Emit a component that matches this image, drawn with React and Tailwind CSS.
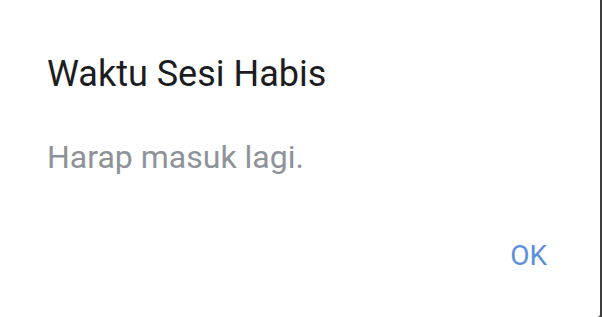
export default function App() {
  return (
    <div className="w-[602px] h-[317px] bg-[#3c3c3c] flex overflow-hidden" style={{ fontFamily: 'Roboto, "Noto Sans", sans-serif' }}>
      <div className="w-[600px] h-full bg-white rounded-br-[3px] flex flex-col pl-[47px] pr-[53px]">
        <h2 className="pt-[56px] text-[36px] leading-none text-[#1b1d21]">Waktu Sesi Habis</h2>
        <p className="mt-[49px] text-[32px] leading-none text-[#8e9399]">Harap masuk lagi.</p>
        <div className="mt-[69px] flex justify-end">
          <button className="text-[28px] leading-none text-[#5b8fdb]">OK</button>
        </div>
      </div>
    </div>
  );
}
